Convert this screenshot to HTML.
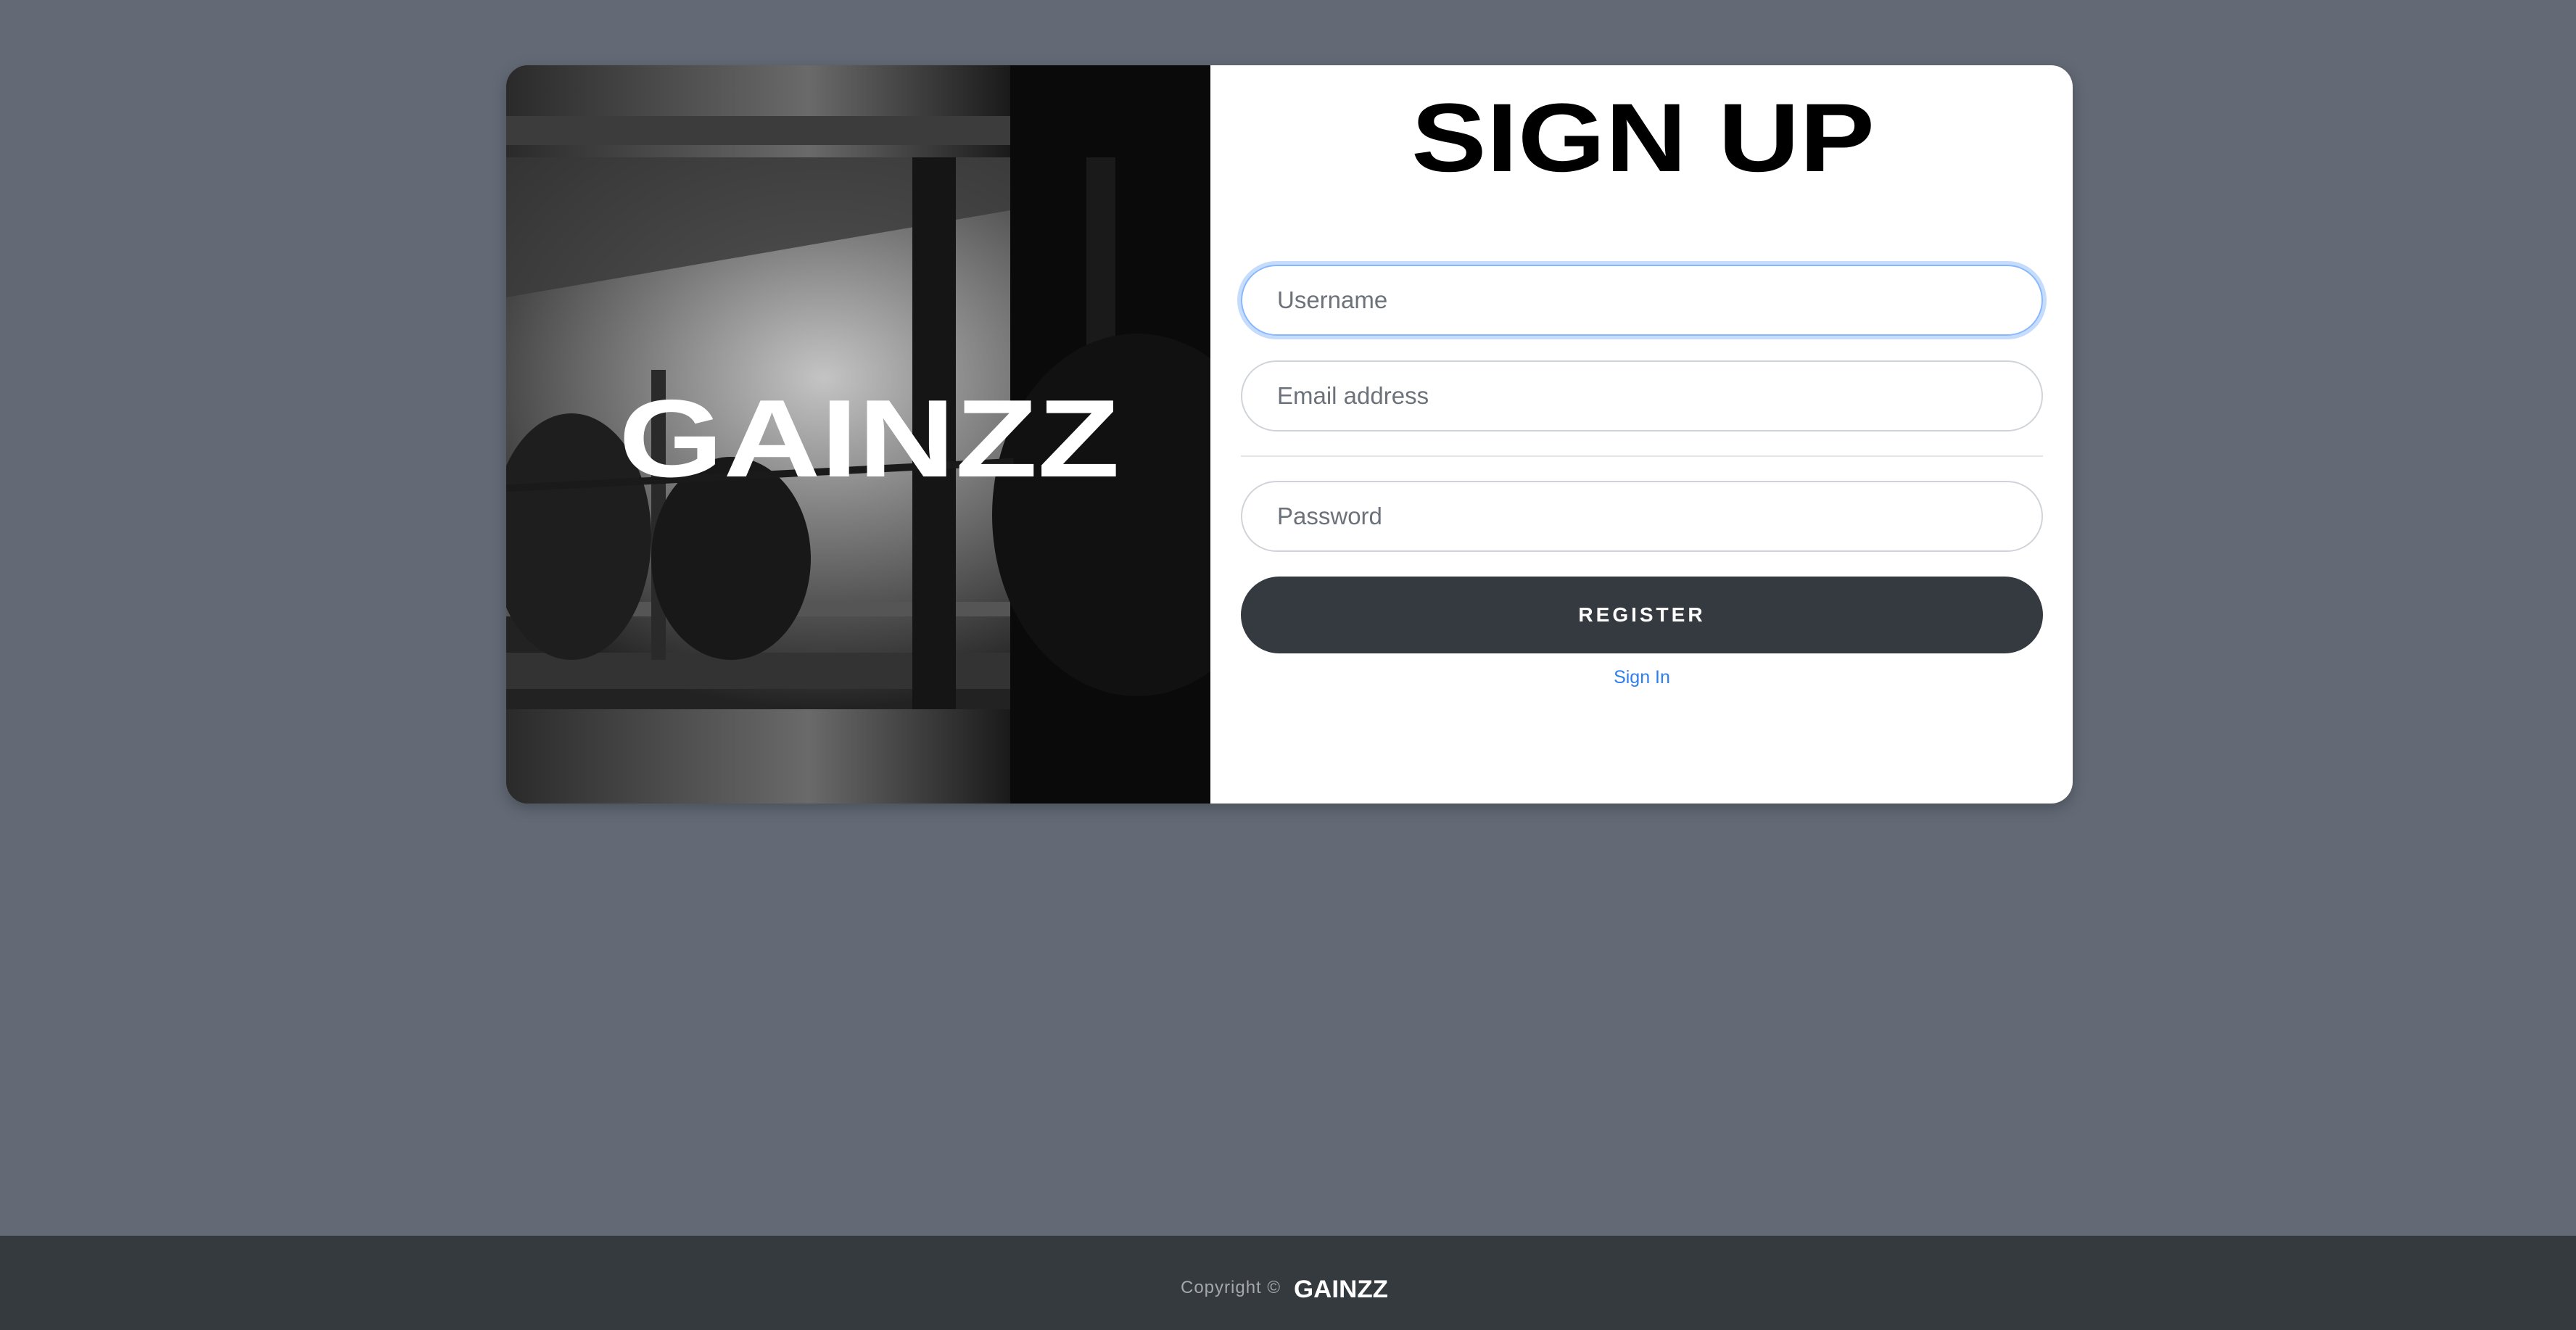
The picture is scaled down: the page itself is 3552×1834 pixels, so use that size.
<!DOCTYPE html>
<html><head><meta charset="utf-8"><style>
*{margin:0;padding:0;box-sizing:border-box}
html,body{width:3552px;height:1834px;overflow:hidden}
body{background:#636a76;font-family:"Liberation Sans",sans-serif;position:relative}
.card{position:absolute;left:698px;top:90px;width:2160px;height:1018px;background:#fff;border-radius:30px;overflow:hidden;box-shadow:0 6px 20px rgba(0,0,0,.25)}
.img{position:absolute;left:0;top:0;width:971px;height:1018px;background:#111}
.inp{position:absolute;left:1013px;width:1106px;height:98px;border:2px solid #d0d4d9;border-radius:49px;font-size:33px;color:#6c727a;padding-left:48px;line-height:94px}
.btn{position:absolute;left:1013px;top:705px;width:1106px;height:106px;border-radius:53px;background:#343a40;color:#fff;font-size:28px;font-weight:bold;letter-spacing:4px;text-align:center;line-height:106px}
.link{position:absolute;left:1013px;width:1106px;top:830px;text-align:center;color:#2f7ef0;font-size:25px}
.hr{position:absolute;left:1013px;top:538px;width:1106px;height:2px;background:#e3e5e8}
footer{position:absolute;left:0;top:1704px;width:3552px;height:130px;background:#353a3f}
</style></head><body>
<div class="card">
 <div class="img">
  <svg width="971" height="1018" viewBox="0 0 971 1018">
   <defs>
    <radialGradient id="g1" cx="0.45" cy="0.4" r="0.6"><stop offset="0" stop-color="#c4c4c4"/><stop offset="0.45" stop-color="#7a7a7a"/><stop offset="1" stop-color="#222"/></radialGradient>
    <linearGradient id="g2" x1="0" y1="0" x2="1" y2="0"><stop offset="0" stop-color="#2a2a2a"/><stop offset="0.6" stop-color="#6a6a6a"/><stop offset="1" stop-color="#1a1a1a"/></linearGradient>
   </defs>
   <rect x="0" y="0" width="971" height="1018" fill="#1c1c1c"/>
   <rect x="0" y="127" width="971" height="761" fill="url(#g1)"/>
   <polygon points="0,127 695,127 695,200 0,320" fill="#3a3a3a" opacity="0.8"/>
   <rect x="0" y="0" width="695" height="127" fill="url(#g2)"/>
   <rect x="0" y="888" width="695" height="130" fill="url(#g2)"/>
   <rect x="0" y="70" width="695" height="40" fill="#3c3c3c"/>
   <rect x="0" y="810" width="695" height="50" fill="#333"/>
   <rect x="0" y="740" width="695" height="20" fill="#555"/>
   <rect x="695" y="0" width="276" height="1018" fill="#0a0a0a"/>
   <rect x="560" y="127" width="60" height="761" fill="#151515"/>
   <rect x="800" y="127" width="40" height="300" fill="#1a1a1a"/>
   <rect x="200" y="420" width="20" height="400" fill="#2a2a2a"/>
   <ellipse cx="870" cy="620" rx="200" ry="250" fill="#111"/>
   <ellipse cx="90" cy="650" rx="110" ry="170" fill="#1e1e1e"/>
   <ellipse cx="310" cy="680" rx="110" ry="140" fill="#181818"/>
   <rect x="0" y="560" width="700" height="10" fill="#1a1a1a" transform="rotate(-3 350 565)"/>
   <text x="155" y="567" font-family="Liberation Sans" font-weight="bold" font-size="152" fill="#fff" textLength="691" lengthAdjust="spacingAndGlyphs">GAINZZ</text>
  </svg>
 </div>
 <svg style="position:absolute;left:1248px;top:40px" width="640" height="124" viewBox="0 0 640 124">
  <text x="0" y="106" font-family="Liberation Sans" font-weight="bold" font-size="134" fill="#000" textLength="639" lengthAdjust="spacingAndGlyphs">SIGN UP</text>
 </svg>
 <div class="inp" style="top:275px;border-color:#86b7fe;box-shadow:0 0 0 5px #c6dcfd">Username</div>
 <div class="inp" style="top:407px">Email address</div>
 <div class="hr"></div>
 <div class="inp" style="top:573px">Password</div>
 <div class="btn">REGISTER</div>
 <div class="link">Sign In</div>
</div>
<footer>
 <div style="position:absolute;left:1628px;top:58px;font-size:24px;color:#a5a8ab;letter-spacing:1px">Copyright ©</div>
 <svg style="position:absolute;left:1784px;top:57px" width="132" height="34" viewBox="0 0 132 34">
  <text x="0" y="28" font-family="Liberation Sans" font-weight="bold" font-size="34" fill="#fff" textLength="130" lengthAdjust="spacingAndGlyphs">GAINZZ</text>
 </svg>
</footer>
</body></html>
